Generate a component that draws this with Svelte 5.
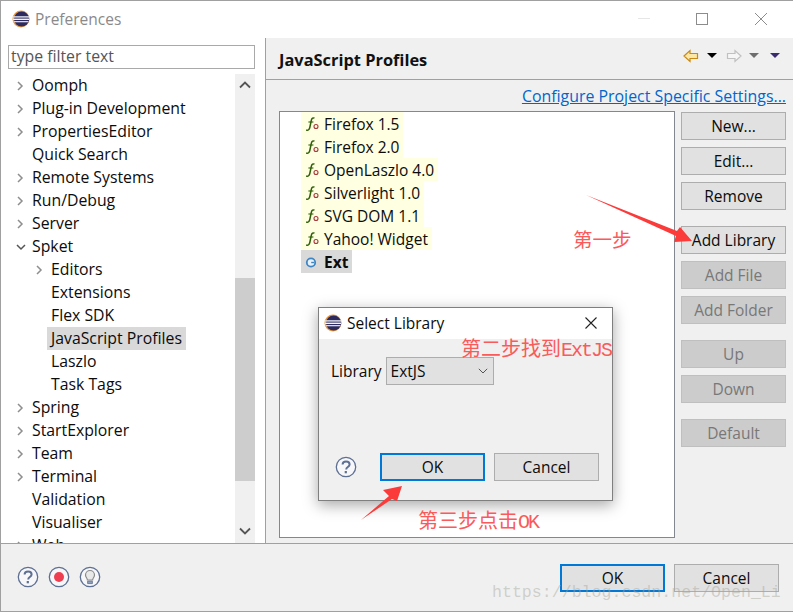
<script lang="ts">
	const tree = [
		{ label: 'Oomph', depth: 0, arrow: 'right' },
		{ label: 'Plug-in Development', depth: 0, arrow: 'right' },
		{ label: 'PropertiesEditor', depth: 0, arrow: 'right' },
		{ label: 'Quick Search', depth: 0 },
		{ label: 'Remote Systems', depth: 0, arrow: 'right' },
		{ label: 'Run/Debug', depth: 0, arrow: 'right' },
		{ label: 'Server', depth: 0, arrow: 'right' },
		{ label: 'Spket', depth: 0, arrow: 'down' },
		{ label: 'Editors', depth: 1, arrow: 'right' },
		{ label: 'Extensions', depth: 1 },
		{ label: 'Flex SDK', depth: 1 },
		{ label: 'JavaScript Profiles', depth: 1, selected: true },
		{ label: 'Laszlo', depth: 1 },
		{ label: 'Task Tags', depth: 1 },
		{ label: 'Spring', depth: 0, arrow: 'right' },
		{ label: 'StartExplorer', depth: 0, arrow: 'right' },
		{ label: 'Team', depth: 0, arrow: 'right' },
		{ label: 'Terminal', depth: 0, arrow: 'right' },
		{ label: 'Validation', depth: 0 },
		{ label: 'Visualiser', depth: 0 },
		{ label: 'Web', depth: 0, arrow: 'right' }
	];
	const profiles = ['Firefox 1.5', 'Firefox 2.0', 'OpenLaszlo 4.0', 'Silverlight 1.0', 'SVG DOM 1.1', 'Yahoo! Widget'];
	const sideButtons = [
		{ label: 'New...', top: 0 },
		{ label: 'Edit...', top: 7 },
		{ label: 'Remove', top: 7 },
		{ label: 'Add Library', top: 16 },
		{ label: 'Add File', top: 7, off: true },
		{ label: 'Add Folder', top: 7, off: true },
		{ label: 'Up', top: 16, off: true },
		{ label: 'Down', top: 7, off: true },
		{ label: 'Default', top: 16, off: true }
	];
</script>

{#snippet eclipse()}
	<svg class="logo" width="18" height="18" viewBox="0 0 18 18">
		<circle cx="9" cy="9" r="8.5" fill="#e8963a" />
		<circle cx="9.6" cy="9" r="7.6" fill="#2c2a5e" />
		<rect x="1" y="6.2" width="16" height="1.4" fill="#e4e4f0" />
		<rect x="1" y="8.6" width="16" height="1.4" fill="#f4f4fa" />
		<rect x="1.5" y="11" width="15" height="1.3" fill="#d8d8e8" />
	</svg>
{/snippet}

{#snippet help()}
	<svg width="22" height="22" viewBox="0 0 22 22">
		<circle cx="11" cy="11" r="9.7" fill="#f7f7fa" stroke="#5d6f93" stroke-width="1.3" />
		<path d="M7.6 8.6c0-2 1.5-3.2 3.5-3.2s3.5 1.1 3.5 3c0 2.6-3.4 2.6-3.4 5" fill="none" stroke="#5d6f93" stroke-width="2" />
		<rect x="9.7" y="15" width="2.2" height="2.3" fill="#5d6f93" />
	</svg>
{/snippet}

<div class="window">
	<header class="titlebar">
		{@render eclipse()}
		<span class="title">Preferences</span>
		<span class="spacer"></span>
		<span class="min"></span>
		<span class="max"></span>
		<svg class="close" width="14" height="14" viewBox="0 0 14 14"><path d="M1 1l12 12M13 1L1 13" stroke="#8c8c8c" stroke-width="1" /></svg>
	</header>

	<div class="main">
		<aside class="left">
			<div class="filter">type filter text</div>
			<div class="tree-wrap">
				<ul class="tree">
					{#each tree as item}
						<li class="row" class:sub={item.depth === 1}>
							<span class="twist">
								{#if item.arrow === 'right'}
									<svg width="8" height="10" viewBox="0 0 8 10"><path d="M2 1l4 4-4 4" fill="none" stroke="#8e8e8e" stroke-width="1.5" /></svg>
								{:else if item.arrow === 'down'}
									<svg width="10" height="8" viewBox="0 0 10 8"><path d="M1 2l4 4 4-4" fill="none" stroke="#555" stroke-width="1.5" /></svg>
								{/if}
							</span>
							<span class="label" class:selected={item.selected}>{item.label}</span>
						</li>
					{/each}
				</ul>
				<div class="scrollbar">
					<svg class="sb-up" width="12" height="8" viewBox="0 0 12 8"><path d="M1 6.5l5-5 5 5" fill="none" stroke="#555" stroke-width="1.8" /></svg>
					<div class="thumb"></div>
					<svg class="sb-down" width="12" height="8" viewBox="0 0 12 8"><path d="M1 1.5l5 5 5-5" fill="none" stroke="#555" stroke-width="1.8" /></svg>
				</div>
			</div>
		</aside>

		<section class="right">
			<div class="page-head">
				<h2>JavaScript Profiles</h2>
				<div class="nav">
					<svg width="16" height="14" viewBox="0 0 16 14"><path d="M1 7l6-5.5V4.5h7.5v5H7v3z" fill="#fbe8a8" stroke="#c88a14" stroke-width="1.2" /></svg>
					<span class="tri black"></span>
					<svg class="fwd" width="16" height="14" viewBox="0 0 16 14"><path d="M15 7L9 1.5V4.5H1.5v5H9v3z" fill="#f6f6f6" stroke="#c0c0c0" stroke-width="1.2" /></svg>
					<span class="tri grey"></span>
					<span class="tri purple"></span>
				</div>
			</div>
			<div class="page-body">
				<div class="link-row"><span class="link">Configure Project Specific Settings...</span></div>
				<div class="content">
					<div class="list">
						{#each profiles as name}
							<div class="profile">
								<svg class="fo" width="15" height="18" viewBox="0 0 15 18">
									<path d="M9.5 3.2C8 2.4 6.8 3.2 6.3 5.4L4.8 12.5C4.4 14.6 3.2 15.6 1.2 15" fill="none" stroke="#2f6108" stroke-width="1.5" />
									<path d="M3.4 7h5" stroke="#2f6108" stroke-width="1.1" />
									<circle cx="11" cy="11.5" r="2" fill="none" stroke="#a83a3a" stroke-width="1.1" />
								</svg>
								<span>{name}</span>
							</div>
						{/each}
						<div class="profile current">
							<svg class="fo" width="15" height="18" viewBox="0 0 15 18">
								<circle cx="6" cy="9.5" r="4.2" fill="#e8f2fa" stroke="#3d86c6" stroke-width="1.8" />
								<path d="M6.2 9.5h3" stroke="#3d86c6" stroke-width="1.4" />
							</svg>
							<span>Ext</span>
						</div>
					</div>
					<div class="buttons">
						{#each sideButtons as b}
							<div class="btn" class:off={b.off} style="margin-top: {b.top}px">{b.label}</div>
						{/each}
					</div>
				</div>
			</div>
		</section>
	</div>

	<footer class="footer">
		<div class="foot-icons">
			{@render help()}
			<svg width="22" height="22" viewBox="0 0 22 22">
				<circle cx="11" cy="11" r="9.7" fill="#f7f7fa" stroke="#5d6f93" stroke-width="1.3" />
				<circle cx="11" cy="11" r="5" fill="#ee3f52" />
			</svg>
			<svg width="22" height="22" viewBox="0 0 22 22">
				<circle cx="11" cy="11" r="9.7" fill="#f7f7fa" stroke="#5d6f93" stroke-width="1.3" />
				<path d="M8.4 14c0-2-1.9-2.6-1.9-5a4.5 4.5 0 019 0c0 2.4-1.9 3-1.9 5z" fill="#e8e8e8" stroke="#8a8a8a" stroke-width="1.2" />
				<path d="M8.6 15.2h4.8v2.4H8.6z" fill="#8fa0bd" stroke="#5d6f93" stroke-width=".8" />
			</svg>
		</div>
		<span class="spacer"></span>
		<div class="btn default">OK</div>
		<div class="btn">Cancel</div>
	</footer>

	<div class="dialog">
		<div class="dlg-title">
			{@render eclipse()}
			<span>Select Library</span>
			<span class="spacer"></span>
			<svg width="14" height="14" viewBox="0 0 14 14"><path d="M1.5 1.5l11 11M12.5 1.5l-11 11" stroke="#222" stroke-width="1.1" /></svg>
		</div>
		<div class="dlg-body">
			<div class="dlg-field">
				<span>Library</span>
				<div class="combo">
					<span>ExtJS</span>
					<svg width="10" height="6" viewBox="0 0 10 6"><path d="M.8.8L5 5l4.2-4.2" fill="none" stroke="#555" stroke-width="1" /></svg>
				</div>
			</div>
			<div class="dlg-foot">
				<span class="dlg-help">{@render help()}</span>
				<div class="btn default">OK</div>
				<div class="btn">Cancel</div>
			</div>
		</div>
	</div>

	<svg class="arrows" width="793" height="612" viewBox="0 0 793 612">
		<polygon points="586,195 677,231 680,227 692,241 674,242 676,236" fill="#fb3a3a" />
		<polygon points="361,520 389,496 383,490 402,486 397,501 392,499" fill="#fb3a3a" />
	</svg>
	<span class="note note1">第一步</span>
	<span class="note note2">第二步找到<span class="latin">ExtJS</span></span>
	<span class="note note3">第三步点击<span class="latin">OK</span></span>
	<span class="mark">https://blog.csdn.net/Open_Li</span>
</div>

<style>
	:global(body) {
		margin: 0;
		background: #fff;
	}

	.window {
		position: relative;
		width: 793px;
		height: 612px;
		box-sizing: border-box;
		display: flex;
		flex-direction: column;
		overflow: hidden;
		background: #fff;
		border: 1px solid #a0a0a0;
		border-right: 0;
		font-family: 'Open Sans', 'Liberation Sans', sans-serif;
		font-size: 15.5px;
		color: #0c0c0c;
	}

	.spacer {
		flex: 1;
	}

	.titlebar {
		height: 37px;
		flex: none;
		display: flex;
		align-items: center;
		padding: 0 25px 2px 11px;
		box-sizing: border-box;
	}

	.title {
		margin-left: 5px;
		font-size: 15.5px;
		color: #8a8a8a;
	}

	.min {
		width: 12px;
		height: 1px;
		background: #e6e6e6;
		margin-right: 46px;
	}

	.max {
		width: 10px;
		height: 10px;
		border: 1px solid #8c8c8c;
		margin-right: 46px;
	}

	.close {
		display: block;
	}

	.main {
		flex: 1;
		min-height: 0;
		display: flex;
	}

	.left {
		width: 265px;
		flex: none;
		box-sizing: border-box;
		padding: 7px 10px 0 7px;
		display: flex;
		flex-direction: column;
		border-right: 1px solid #a0a0a0;
	}

	.filter {
		height: 24px;
		box-sizing: border-box;
		border: 1px solid #a9a9a9;
		padding-left: 2px;
		line-height: 21px;
		color: #555;
		font-size: 15.8px;
		flex: none;
	}

	.tree-wrap {
		flex: 1;
		min-height: 0;
		margin-top: 5px;
		display: flex;
		overflow: hidden;
		font-size: 15.8px;
	}

	.tree {
		flex: 1;
		list-style: none;
		margin: 0;
		padding: 0;
	}

	.row {
		height: 23px;
		display: flex;
		align-items: center;
		padding-left: 8px;
		white-space: nowrap;
	}

	.row.sub {
		padding-left: 27px;
	}

	.twist {
		width: 16px;
		flex: none;
		display: flex;
		align-items: center;
	}

	.label {
		padding: 0 4px 0 0;
		line-height: 23px;
	}

	.label.selected {
		background: #d9d9d9;
		margin-left: -4px;
		padding-left: 4px;
	}

	.scrollbar {
		width: 20px;
		flex: none;
		position: relative;
		background: #f0f0f0;
	}

	.thumb {
		margin-top: 204px;
		height: 203px;
		background: #cdcdcd;
	}

	.sb-up,
	.sb-down {
		position: absolute;
		left: 4px;
	}

	.sb-up {
		top: 7px;
	}

	.sb-down {
		bottom: 8px;
	}

	.right {
		flex: 1;
		min-width: 0;
		background: #f0f0f0;
		display: flex;
		flex-direction: column;
	}

	.page-head {
		height: 42px;
		flex: none;
		box-sizing: border-box;
		border-bottom: 1px solid #a0a0a0;
		display: flex;
		align-items: center;
		justify-content: space-between;
		padding: 2px 13px 0 13px;
	}

	h2 {
		margin: 0;
		font-size: 16.4px;
		font-weight: 700;
		color: #111;
	}

	.nav {
		display: flex;
		align-items: center;
		margin-top: -8px;
	}

	.fwd {
		margin-left: 9px;
	}

	.tri {
		width: 0;
		height: 0;
		border-left: 5px solid transparent;
		border-right: 5px solid transparent;
		margin-left: 7px;
	}

	.tri.black {
		border-top: 5px solid #000;
		margin-left: 8px;
	}

	.tri.grey {
		border-top: 5px solid #6e6e6e;
	}

	.tri.purple {
		border-top: 5px solid #3c2a6e;
		margin-left: 11px;
	}

	.page-body {
		flex: 1;
		min-height: 0;
		padding: 0 7px 5px 13px;
		display: flex;
		flex-direction: column;
	}

	.link-row {
		height: 31px;
		flex: none;
		display: flex;
		justify-content: flex-end;
		align-items: center;
		box-sizing: border-box;
	}

	.link {
		color: #0066cc;
		text-decoration: underline;
		font-size: 15.9px;
		white-space: nowrap;
	}

	.content {
		flex: 1;
		min-height: 0;
		display: flex;
		gap: 6px;
	}

	.list {
		flex: 1;
		background: #fff;
		border: 1px solid #828790;
		padding: 0 0 0 21px;
		box-sizing: border-box;
	}

	.profile {
		width: fit-content;
		height: 23px;
		display: flex;
		align-items: center;
		gap: 4px;
		padding: 0 4px;
		background: #ffffe1;
	}

	.fo {
		display: block;
		flex: none;
	}

	.profile.current {
		background: #d9d9d9;
		font-weight: 700;
	}

	.buttons {
		width: 105px;
		flex: none;
		display: flex;
		flex-direction: column;
		padding-top: 1px;
	}

	.btn {
		height: 28px;
		box-sizing: border-box;
		width: 105px;
		flex: none;
		border: 1px solid #adadad;
		background: #e1e1e1;
		text-align: center;
		line-height: 26px;
		font-size: 15.5px;
	}

	.btn.off {
		background: #cccccc;
		border-color: #bfbfbf;
		color: #787878;
	}

	.btn.default {
		border: 2px solid #0078d7;
		line-height: 24px;
	}

	.footer {
		height: 68px;
		flex: none;
		box-sizing: border-box;
		background: #f0f0f0;
		border-top: 1px solid #a0a0a0;
		display: flex;
		align-items: flex-start;
		padding: 20px 14px 0 16px;
		gap: 9px;
	}

	.foot-icons {
		display: flex;
		gap: 9px;
		margin-top: 2px;
	}

	.foot-icons svg {
		display: block;
	}

	.dialog {
		position: absolute;
		left: 317px;
		top: 306px;
		width: 295px;
		height: 194px;
		box-sizing: border-box;
		border: 1px solid #7f7f7f;
		background: #f0f0f0;
		box-shadow: 0 4px 14px rgba(0, 0, 0, 0.35);
		display: flex;
		flex-direction: column;
	}

	.dlg-title {
		height: 31px;
		flex: none;
		background: #fff;
		display: flex;
		align-items: center;
		gap: 5px;
		padding: 0 14px 1px 5px;
		box-sizing: border-box;
	}

	.dlg-body {
		flex: 1;
		display: flex;
		flex-direction: column;
		justify-content: space-between;
		padding: 18px 13px 19px 12px;
	}

	.dlg-field {
		display: flex;
		align-items: center;
		gap: 4px;
	}

	.combo {
		width: 108px;
		height: 28px;
		box-sizing: border-box;
		border: 1px solid #adadad;
		background: #e1e1e1;
		display: flex;
		align-items: center;
		justify-content: space-between;
		padding: 0 5px 0 4px;
	}

	.dlg-foot {
		display: flex;
		align-items: center;
		gap: 9px;
	}

	.dlg-help {
		display: block;
		height: 22px;
		margin: 0 14px 0 4px;
	}

	.arrows {
		position: absolute;
		left: -1px;
		top: -1px;
		pointer-events: none;
	}

	.note {
		position: absolute;
		font-family: 'Liberation Mono', 'Noto Sans CJK SC', monospace;
		font-size: 20px;
		line-height: 24px;
		color: #fa5a5a;
		white-space: nowrap;
	}

	.latin {
		letter-spacing: -2px;
	}

	.note1 {
		left: 572px;
		top: 229px;
		font-size: 19.5px;
	}

	.note2 {
		left: 460px;
		top: 338px;
	}

	.note3 {
		left: 417px;
		top: 510px;
	}

	.mark {
		position: absolute;
		left: 491px;
		top: 582px;
		font-family: 'Liberation Mono', monospace;
		font-size: 16.6px;
		line-height: 20px;
		color: rgba(165, 165, 155, 0.45);
		white-space: nowrap;
	}
</style>
